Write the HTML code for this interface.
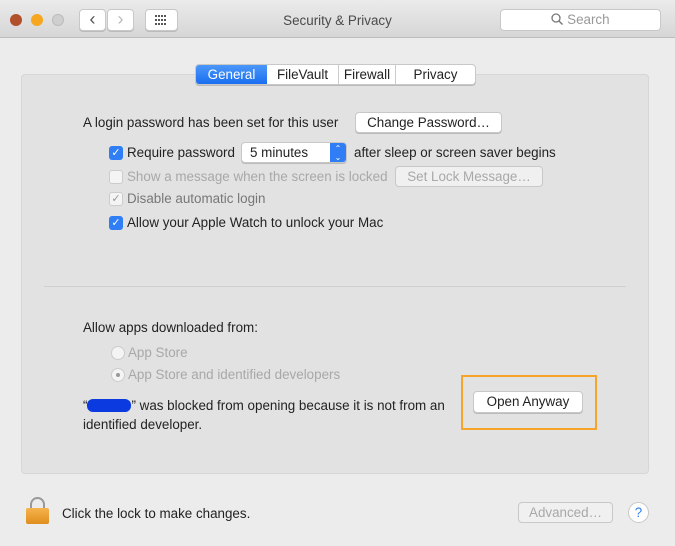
<!DOCTYPE html>
<html><head><style>
*{box-sizing:border-box;margin:0;padding:0}
body{width:675px;height:546px;background:#ececec;font-family:"Liberation Sans",sans-serif;font-size:13.4px;color:#222;position:relative;overflow:hidden}
.a{position:absolute}
.title{left:0;top:0;width:675px;height:38px;background:linear-gradient(#ebebeb,#d6d6d6);border-bottom:1px solid #bdbdbd}
.dot{width:12px;height:12px;border-radius:50%;top:14px}
.btn{background:#fff;border:1px solid #c8c8c8;border-radius:4px;box-shadow:0 1px 0 #bbb;text-align:center}
.panel{left:21px;top:74px;width:628px;height:400px;background:#e2e2e2;border:1px solid #d6d6d6;border-radius:4px}
.cb{width:14px;height:14px;border-radius:3px;background:#2f7ef5;color:#fff;font-size:11px;line-height:14px;text-align:center}
.cbd{width:14px;height:14px;border-radius:3px;background:#f4f4f4;border:1px solid #ccc;color:#999;font-size:11px;line-height:12px;text-align:center}
.gray{color:#a8a8a8}
.rad{width:14px;height:14px;border-radius:50%;background:#f4f4f4;border:1px solid #ccc}
</style></head><body>
<div class="a title"></div>
<div class="a dot" style="left:10px;background:#b3502c"></div>
<div class="a dot" style="left:31px;background:#f7a71f"></div>
<div class="a dot" style="left:52px;background:#cfcfcf;border:1px solid #bbb"></div>
<div class="a btn" style="left:79px;top:9px;width:27px;height:22px;font-size:18px;line-height:19px;color:#555">‹</div>
<div class="a btn" style="left:107px;top:9px;width:27px;height:22px;font-size:18px;line-height:19px;color:#bbb">›</div>
<div class="a btn" style="left:145px;top:9px;width:33px;height:22px"><svg width="31" height="20" viewBox="0 0 31 20"><g fill="#555"><rect x="9" y="5" width="2" height="2"/><rect x="12" y="5" width="2" height="2"/><rect x="15" y="5" width="2" height="2"/><rect x="18" y="5" width="2" height="2"/><rect x="9" y="9" width="2" height="2"/><rect x="12" y="9" width="2" height="2"/><rect x="15" y="9" width="2" height="2"/><rect x="18" y="9" width="2" height="2"/><rect x="9" y="13" width="2" height="2"/><rect x="12" y="13" width="2" height="2"/><rect x="15" y="13" width="2" height="2"/><rect x="18" y="13" width="2" height="2"/></g></svg></div>
<div class="a" style="left:0;width:675px;top:13px;text-align:center;color:#4a4a4a">Security &amp; Privacy</div>
<div class="a btn" style="left:500px;top:9px;width:161px;height:22px;color:#999;line-height:20px;box-shadow:none"><svg width="12" height="12" style="vertical-align:-1px" viewBox="0 0 12 12"><circle cx="5" cy="5" r="4" fill="none" stroke="#777" stroke-width="1.3"/><path d="M8 8l3.5 3.5" stroke="#777" stroke-width="1.4"/></svg> Search</div>
<div class="a panel"></div>
<div class="a" style="left:195px;top:64px;width:281px;height:21px;display:flex;border:1px solid #c8c8c8;border-radius:4px;background:#fff;overflow:hidden;line-height:19px;box-shadow:0 1px 0 #bbb">
<div style="width:71px;background:linear-gradient(#4a97fa,#1a6ef0);color:#fff;text-align:center">General</div>
<div style="width:72px;text-align:center;border-right:1px solid #ccc">FileVault</div>
<div style="width:57px;text-align:center;border-right:1px solid #ccc">Firewall</div>
<div style="flex:1;text-align:center">Privacy</div></div>
<div class="a" style="left:83px;top:115px">A login password has been set for this user</div>
<div class="a btn" style="left:355px;top:112px;width:147px;height:21px;line-height:19px">Change Password…</div>
<div class="a cb" style="left:109px;top:146px">✓</div>
<div class="a" style="left:127px;top:145px">Require password</div>
<div class="a btn" style="left:241px;top:142px;width:106px;height:21px;line-height:19px;text-align:left;padding-left:8px;overflow:hidden">5 minutes<div class="a" style="right:0;top:0;width:16px;height:21px;background:#2f7ef5;color:#fff;font-size:8px;line-height:9px;text-align:center;padding-top:1px">⌃<br>⌄</div></div>
<div class="a" style="left:354px;top:145px">after sleep or screen saver begins</div>
<div class="a cbd" style="left:109px;top:170px"></div>
<div class="a gray" style="left:127px;top:169px">Show a message when the screen is locked</div>
<div class="a btn gray" style="left:395px;top:166px;width:148px;height:21px;line-height:19px;background:#f0f0f0;box-shadow:none">Set Lock Message…</div>
<div class="a cbd" style="left:109px;top:192px">✓</div>
<div class="a" style="left:127px;top:191px;color:#777">Disable automatic login</div>
<div class="a cb" style="left:109px;top:216px">✓</div>
<div class="a" style="left:127px;top:215px">Allow your Apple Watch to unlock your Mac</div>
<div class="a" style="left:44px;top:286px;width:582px;height:1px;background:#cfcfcf"></div>
<div class="a" style="left:83px;top:320px">Allow apps downloaded from:</div>
<div class="a rad" style="left:111px;top:346px"></div>
<div class="a gray" style="left:128px;top:345px">App Store</div>
<div class="a rad" style="left:111px;top:368px"><div class="a" style="left:4px;top:4px;width:4px;height:4px;border-radius:50%;background:#999"></div></div>
<div class="a gray" style="left:128px;top:367px">App Store and identified developers</div>
<div class="a" style="left:83px;top:396px;line-height:19px;width:380px">“<span style="display:inline-block;width:44px;height:13px;background:#0a3ae0;border-radius:6px;vertical-align:-2px"></span>” was blocked from opening because it is not from an<br>identified developer.</div>
<div class="a" style="left:461px;top:375px;width:136px;height:55px;border:2px solid #f7a52a"></div>
<div class="a btn" style="left:473px;top:391px;width:110px;height:22px;line-height:20px">Open Anyway</div>
<div class="a" style="left:26px;top:497px;width:23px;height:27px">
<div class="a" style="left:4px;top:0;width:15px;height:14px;border:2px solid #999;border-bottom:none;border-radius:8px 8px 0 0"></div>
<div class="a" style="left:0;top:11px;width:23px;height:16px;background:linear-gradient(#f5b44d,#e08d1e);border-radius:2px"></div></div>
<div class="a" style="left:62px;top:506px">Click the lock to make changes.</div>
<div class="a btn gray" style="left:518px;top:502px;width:95px;height:21px;line-height:19px;background:#f0f0f0;box-shadow:none">Advanced…</div>
<div class="a" style="left:628px;top:502px;width:21px;height:21px;border-radius:50%;background:#fff;border:1px solid #c8c8c8;color:#2f7ef5;text-align:center;line-height:19px">?</div>
</body></html>
